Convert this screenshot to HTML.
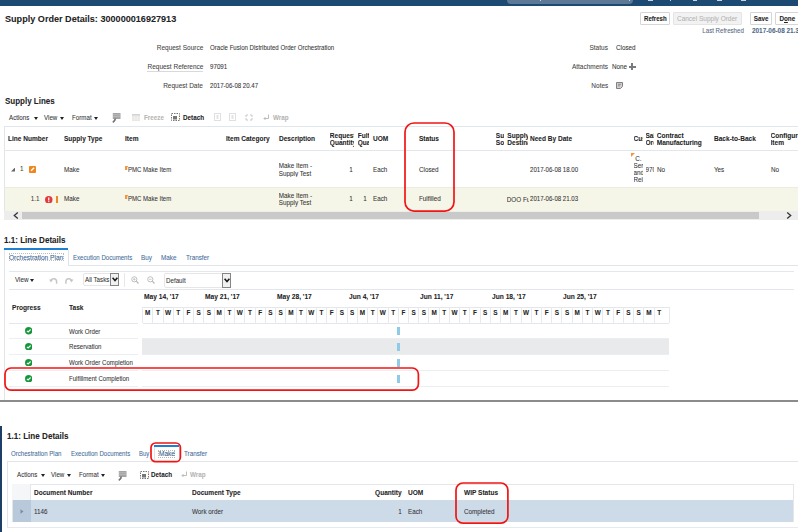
<!DOCTYPE html>
<html><head><meta charset="utf-8"><style>
html,body{margin:0;padding:0;background:#fff;width:803px;height:532px;overflow:hidden;position:relative}
body{font-family:"Liberation Sans",sans-serif}
.t{position:absolute;white-space:nowrap;line-height:1;font-family:"Liberation Sans",sans-serif;-webkit-text-stroke:0.06px currentColor}
.r{position:absolute;display:block}
</style></head><body>
<div class="r" style="left:0px;top:0px;width:798px;height:5.6px;background:#1d4a72"></div>
<div class="r" style="left:507px;top:0px;width:126px;height:3.6px;background:#5c7995;border-radius:0 0 5px 5px"></div>
<div class="r" style="left:539.5px;top:0px;width:1.5px;height:1.3px;background:#c9d4de"></div>
<div class="r" style="left:628.5px;top:0px;width:1.5px;height:1.3px;background:#c9d4de"></div>
<div class="r" style="left:647.5px;top:0px;width:5px;height:1.3px;background:#c9d4de"></div>
<div class="r" style="left:669.5px;top:0px;width:1.5px;height:1.3px;background:#c9d4de"></div>
<div class="r" style="left:693px;top:0px;width:4px;height:1.3px;background:#c9d4de"></div>
<div class="r" style="left:717.3px;top:0px;width:4.5px;height:1.3px;background:#c9d4de"></div>
<div class="r" style="left:741px;top:0px;width:4.5px;height:1.3px;background:#c9d4de"></div>
<div class="t" style="left:5px;top:14.00px;font-size:9.828px;font-weight:bold;color:#222;transform:scaleX(0.9259);transform-origin:0 0;">Supply Order Details: 300000016927913</div>
<div class="r" style="left:639.5px;top:12.1px;width:30.799999999999955px;height:13.4px;background:#fff;border:1px solid #d6d6d6;box-sizing:border-box;border-radius:1px"></div>
<div class="t" style="left:639.5px;width:30.799999999999955px;top:16px;font-size:6.588px;font-weight:bold;color:#222;text-align:center;transform:scaleX(0.9259);transform-origin:50% 0">Refresh</div>
<div class="r" style="left:673.4px;top:12.1px;width:68.20000000000005px;height:13.4px;background:#f2f2f2;border:1px solid #e4e4e4;box-sizing:border-box;border-radius:1px"></div>
<div class="t" style="left:673.4px;width:68.20000000000005px;top:15px;font-size:7.020px;font-weight:normal;color:#b3b3b3;text-align:center;transform:scaleX(0.9259);transform-origin:50% 0">Cancel Supply Order</div>
<div class="r" style="left:750.2px;top:12.2px;width:22.09999999999991px;height:12.8px;background:#fff;border:1px solid #d6d6d6;box-sizing:border-box;border-radius:1px"></div>
<div class="t" style="left:750.2px;width:22.09999999999991px;top:16px;font-size:6.804px;font-weight:bold;color:#222;text-align:center;transform:scaleX(0.9259);transform-origin:50% 0">Save</div>
<div class="r" style="left:775.3px;top:12.2px;width:24.700000000000045px;height:12.8px;background:#fff;border:1px solid #d6d6d6;box-sizing:border-box;border-radius:1px"></div>
<div class="t" style="left:775.3px;width:24.700000000000045px;top:16px;font-size:6.804px;font-weight:bold;color:#222;text-align:center;transform:scaleX(0.9259);transform-origin:50% 0">D<u>o</u>ne</div>
<div class="t" style="right:58.700000000000045px;top:28.00px;font-size:6.620px;font-weight:normal;color:#53687d;text-align:right;transform:scaleX(0.9259);transform-origin:100% 0;">Last Refreshed</div>
<div class="t" style="left:751.8px;top:28.00px;font-size:6.912px;font-weight:bold;color:#4d6a88;transform:scaleX(0.9259);transform-origin:0 0;">2017-06-08 21.35</div>
<div class="r" style="left:797.8px;top:8px;width:6px;height:30px;background:#fff"></div>
<div class="t" style="right:600px;top:44.00px;font-size:7.020px;font-weight:normal;color:#444;text-align:right;transform:scaleX(0.9259);transform-origin:100% 0;">Request Source</div>
<div class="t" style="left:210px;top:45.00px;font-size:6.588px;font-weight:normal;color:#333;transform:scaleX(0.9259);transform-origin:0 0;">Oracle Fusion Distributed Order Orchestration</div>
<div class="t" style="right:600px;top:63.00px;font-size:7.020px;font-weight:normal;color:#444;text-align:right;transform:scaleX(0.9259);transform-origin:100% 0;">Request Reference</div>
<div class="r" style="left:147px;top:70.5px;width:56px;height:1px;background:#d9d9d9"></div>
<div class="t" style="left:210px;top:64.00px;font-size:6.696px;font-weight:normal;color:#333;transform:scaleX(0.9259);transform-origin:0 0;">97091</div>
<div class="t" style="right:600px;top:82.00px;font-size:7.020px;font-weight:normal;color:#444;text-align:right;transform:scaleX(0.9259);transform-origin:100% 0;">Request Date</div>
<div class="t" style="left:210px;top:83.00px;font-size:6.588px;font-weight:normal;color:#333;transform:scaleX(0.9259);transform-origin:0 0;">2017-06-08 20.47</div>
<div class="t" style="right:195px;top:44.00px;font-size:7.020px;font-weight:normal;color:#444;text-align:right;transform:scaleX(0.9259);transform-origin:100% 0;">Status</div>
<div class="t" style="left:615.5px;top:45.00px;font-size:6.804px;font-weight:normal;color:#333;transform:scaleX(0.9259);transform-origin:0 0;">Closed</div>
<div class="t" style="right:195px;top:63.00px;font-size:7.020px;font-weight:normal;color:#444;text-align:right;transform:scaleX(0.9259);transform-origin:100% 0;">Attachments</div>
<div class="t" style="left:612.3px;top:64.00px;font-size:6.804px;font-weight:normal;color:#333;transform:scaleX(0.9259);transform-origin:0 0;">None</div>
<div class="r" style="left:628.8px;top:65.6px;width:7px;height:2px;background:#7a7a7a"></div>
<div class="r" style="left:631.3px;top:63.1px;width:2px;height:7px;background:#7a7a7a"></div>
<div class="t" style="right:195px;top:82.00px;font-size:7.020px;font-weight:normal;color:#444;text-align:right;transform:scaleX(0.9259);transform-origin:100% 0;">Notes</div>
<svg class="r" style="left:616.3px;top:81.5px" width="7" height="7" viewBox="0 0 7 7"><path d="M0.5 0.5 H6.5 V4.5 L4.5 6.5 H0.5 Z" fill="#d0d0d0" stroke="#808080" stroke-width="1"/><path d="M2 2.3 H5 M2 3.8 H4" stroke="#808080" stroke-width="0.8"/></svg>
<div class="t" style="left:5px;top:97.00px;font-size:8.640px;font-weight:bold;color:#222;transform:scaleX(0.9259);transform-origin:0 0;">Supply Lines</div>
<div class="t" style="left:9.2px;top:115.00px;font-size:6.696px;font-weight:normal;color:#333;transform:scaleX(0.9259);transform-origin:0 0;">Actions</div>
<div class="r" style="left:33.5px;top:116.63px;width:0;height:0;border-left:2.6px solid transparent;border-right:2.6px solid transparent;border-top:3.12px solid #222"></div>
<div class="t" style="left:44px;top:115.00px;font-size:6.696px;font-weight:normal;color:#333;transform:scaleX(0.9259);transform-origin:0 0;">View</div>
<div class="r" style="left:59.5px;top:116.63px;width:0;height:0;border-left:2.6px solid transparent;border-right:2.6px solid transparent;border-top:3.12px solid #222"></div>
<div class="t" style="left:71.5px;top:115.00px;font-size:6.696px;font-weight:normal;color:#333;transform:scaleX(0.9259);transform-origin:0 0;">Format</div>
<div class="r" style="left:93.5px;top:116.63px;width:0;height:0;border-left:2.6px solid transparent;border-right:2.6px solid transparent;border-top:3.12px solid #222"></div>
<svg class="r" style="left:111.5px;top:112.9px" width="9" height="10" viewBox="0 0 9 10"><rect x="0.8" y="0" width="7.7" height="6" fill="#a5a5a5"/><path d="M1 1.8 H8.3 M1 3.6 H8.3" stroke="#c8c8c8" stroke-width="0.6"/><path d="M3.3 5.5 Q3.3 7.6 0.8 9.3" stroke="#707070" stroke-width="1.6" fill="none"/></svg>
<svg class="r" style="left:132.2px;top:114px" width="8" height="7" viewBox="0 0 8 7"><rect x="0" y="0" width="8" height="7" fill="#e6e6e6"/><rect x="0" y="0" width="8" height="1.3" fill="#d2d2d2"/><path d="M2.7 1.3 V7 M5.3 1.3 V7 M0 3.5 H8 M0 5.2 H8" stroke="#f4f4f4" stroke-width="0.5"/></svg>
<div class="t" style="left:143.6px;top:115.00px;font-size:6.804px;font-weight:bold;color:#b5b5b5;transform:scaleX(0.9259);transform-origin:0 0;">Freeze</div>
<svg class="r" style="left:171px;top:113px" width="9" height="8" viewBox="0 0 9 8"><rect x="0.5" y="0.5" width="8" height="7" fill="none" stroke="#777" stroke-width="1" stroke-dasharray="1.5 1"/><rect x="2" y="3" width="4" height="3.5" fill="#777"/></svg>
<div class="t" style="left:182.8px;top:115.00px;font-size:6.804px;font-weight:bold;color:#222;transform:scaleX(0.9259);transform-origin:0 0;">Detach</div>
<svg class="r" style="left:213.7px;top:113px" width="7" height="8" viewBox="0 0 7 8"><rect x="0.5" y="0.5" width="6" height="7" fill="none" stroke="#e0e0e0" stroke-width="1"/><rect x="2.5" y="2" width="2" height="4" fill="#e4e4e4"/></svg>
<svg class="r" style="left:228.7px;top:113px" width="7" height="8" viewBox="0 0 7 8"><rect x="0.5" y="0.5" width="6" height="7" fill="none" stroke="#e0e0e0" stroke-width="1"/><rect x="2.5" y="2" width="2" height="4" fill="#e4e4e4"/></svg>
<svg class="r" style="left:245px;top:113.5px" width="8" height="7" viewBox="0 0 8 7"><path d="M1 1h2M5 1h2M1 6h2M5 6h2M1 1v2M7 1v2M1 4v2M7 4v2" stroke="#c8c8c8" stroke-width="1"/></svg>
<svg class="r" style="left:262.5px;top:113.5px" width="7" height="7" viewBox="0 0 7 7"><path d="M5.5 0.5 V4.5 H1 M2.5 3 L1 4.5 L2.5 6" stroke="#bdbdbd" stroke-width="1" fill="none"/></svg>
<div class="t" style="left:272.5px;top:115.00px;font-size:6.804px;font-weight:bold;color:#b5b5b5;transform:scaleX(0.9259);transform-origin:0 0;">Wrap</div>
<div class="r" style="left:4.2px;top:126px;width:793.8px;height:93.69999999999999px;border:1px solid #e1e6eb;border-bottom:none;border-right:none;box-sizing:border-box;background:#fff"></div>
<div class="r" style="left:4.2px;top:150.3px;width:793.8px;height:1px;background:#e3e7eb"></div>
<div class="r" style="left:5.2px;top:187px;width:792.8px;height:23.6px;background:#f6f6e8"></div>
<div class="r" style="left:5.2px;top:186.6px;width:792.8px;height:1px;background:#ececdc"></div>
<div class="r" style="left:4.2px;top:210.6px;width:793.8px;height:9.1px;background:#ededed"></div>
<div class="r" style="left:22px;top:211.8px;width:737px;height:7px;background:#c9c9c9"></div>
<svg class="r" style="left:12.5px;top:212px" width="6" height="7" viewBox="0 0 6 7"><path d="M4.8 0.6 L1.3 3.5 L4.8 6.4" stroke="#333" stroke-width="1.3" fill="none"/></svg>
<svg class="r" style="left:785.5px;top:212px" width="6" height="7" viewBox="0 0 6 7"><path d="M1.2 0.6 L4.7 3.5 L1.2 6.4" stroke="#333" stroke-width="1.3" fill="none"/></svg>
<div class="t" style="left:7.5px;top:135.00px;font-size:7.074px;font-weight:bold;color:#222;transform:scaleX(0.9259);transform-origin:0 0;">Line Number</div>
<div class="t" style="left:64px;top:135.00px;font-size:7.074px;font-weight:bold;color:#222;transform:scaleX(0.9259);transform-origin:0 0;">Supply Type</div>
<div class="t" style="left:125px;top:135.00px;font-size:7.074px;font-weight:bold;color:#222;transform:scaleX(0.9259);transform-origin:0 0;">Item</div>
<div class="t" style="left:225.7px;top:135.00px;font-size:7.074px;font-weight:bold;color:#222;transform:scaleX(0.9259);transform-origin:0 0;">Item Category</div>
<div class="t" style="left:278.8px;top:135.00px;font-size:7.074px;font-weight:bold;color:#222;transform:scaleX(0.9259);transform-origin:0 0;">Description</div>
<div class="t" style="left:329.8px;top:131.50px;width:24.2px;overflow:hidden;font-size:6.55px;line-height:7.6px;font-weight:bold;color:#222">Requested<br>Quantity</div>
<div class="t" style="left:357.7px;top:131.50px;width:11px;overflow:hidden;font-size:6.55px;line-height:7.6px;font-weight:bold;color:#222">Fulfilled<br>Quantity</div>
<div class="t" style="left:372.6px;top:135.00px;font-size:7.074px;font-weight:bold;color:#222;transform:scaleX(0.9259);transform-origin:0 0;">UOM</div>
<div class="t" style="left:419.3px;top:135.00px;font-size:7.074px;font-weight:bold;color:#222;transform:scaleX(0.9259);transform-origin:0 0;">Status</div>
<div class="t" style="left:495.8px;top:131.50px;width:8.3px;overflow:hidden;font-size:6.55px;line-height:7.6px;font-weight:bold;color:#222">Supply<br>Source</div>
<div class="t" style="left:507.3px;top:131.50px;width:20.5px;overflow:hidden;font-size:6.55px;line-height:7.6px;font-weight:bold;color:#222">Supply<br>Destination</div>
<div class="t" style="left:530.3px;top:135.00px;font-size:7.074px;font-weight:bold;color:#222;transform:scaleX(0.9259);transform-origin:0 0;">Need By Date</div>
<div class="t" style="left:633.5px;top:135.30px;width:9.5px;overflow:hidden;font-size:6.55px;line-height:7.6px;font-weight:bold;color:#222">Customer</div>
<div class="t" style="left:645.5px;top:131.50px;width:8.5px;overflow:hidden;font-size:6.55px;line-height:7.6px;font-weight:bold;color:#222">Sales<br>Order</div>
<div class="t" style="left:656.7px;top:131.50px;width:50px;overflow:hidden;font-size:6.55px;line-height:7.6px;font-weight:bold;color:#222">Contract<br>Manufacturing</div>
<div class="t" style="left:713.7px;top:135.00px;font-size:7.074px;font-weight:bold;color:#222;transform:scaleX(0.9259);transform-origin:0 0;">Back-to-Back</div>
<div class="t" style="left:770.5px;top:131.50px;width:27.5px;overflow:hidden;font-size:6.55px;line-height:7.6px;font-weight:bold;color:#222">Configured<br>Item</div>
<svg class="r" style="left:10.5px;top:167.3px" width="4.6" height="4.6" viewBox="0 0 4.6 4.6"><path d="M4.6 0 V4.6 H0 Z" fill="#666"/></svg>
<div class="t" style="left:20px;top:166.00px;font-size:6.804px;font-weight:normal;color:#444;transform:scaleX(0.9259);transform-origin:0 0;">1</div>
<div class="r" style="left:28.5px;top:166.1px;width:7.1px;height:6.6px;background:#f0861e;border-radius:1px"></div>
<svg class="r" style="left:28.5px;top:166.1px" width="7.1" height="6.6" viewBox="0 0 7 6.6"><path d="M2 4.8 L5 1.8" stroke="#fff" stroke-width="1.4"/></svg>
<div class="t" style="left:63.7px;top:167.00px;font-size:6.804px;font-weight:normal;color:#333;transform:scaleX(0.9259);transform-origin:0 0;">Make</div>
<svg class="r" style="left:125.2px;top:165.9px" width="3.4" height="4" viewBox="0 0 3.4 4"><path d="M0 0 H3.4 L2.2 1.6 V4 H0 Z" fill="#f7953e"/></svg>
<div class="t" style="left:128.3px;top:167.00px;font-size:6.534px;font-weight:normal;color:#333;transform:scaleX(0.9259);transform-origin:0 0;">PMC Make Item</div>
<div class="t" style="left:278.8px;top:162.30px;width:40px;overflow:hidden;font-size:6.3px;line-height:7.3px;font-weight:normal;color:#333">Make Item -<br>Supply Test</div>
<div class="t" style="right:450.5px;top:167.00px;font-size:6.804px;font-weight:normal;color:#333;text-align:right;transform:scaleX(0.9259);transform-origin:100% 0;">1</div>
<div class="t" style="left:372.6px;top:167.00px;font-size:6.804px;font-weight:normal;color:#333;transform:scaleX(0.9259);transform-origin:0 0;">Each</div>
<div class="t" style="left:419.3px;top:167.00px;font-size:6.804px;font-weight:normal;color:#333;transform:scaleX(0.9259);transform-origin:0 0;">Closed</div>
<div class="t" style="left:530.3px;top:167.00px;font-size:6.588px;font-weight:normal;color:#333;transform:scaleX(0.9259);transform-origin:0 0;">2017-06-08 18.00</div>
<svg class="r" style="left:631px;top:152.5px" width="4" height="4" viewBox="0 0 4 4"><path d="M0 0 H4 L0 4 Z" fill="#f7953e"/></svg>
<div class="t" style="left:633.5px;top:154.80px;width:9px;overflow:hidden;font-size:6.3px;line-height:7px;font-weight:normal;color:#333">&nbsp;C.<br>Ser<br>and<br>Rei</div>
<div class="t" style="left:645.5px;top:165.80px;width:8.5px;overflow:hidden;font-size:6.3px;line-height:7.6px;font-weight:normal;color:#333">970</div>
<div class="t" style="left:657px;top:167.00px;font-size:6.804px;font-weight:normal;color:#333;transform:scaleX(0.9259);transform-origin:0 0;">No</div>
<div class="t" style="left:713.7px;top:167.00px;font-size:6.804px;font-weight:normal;color:#333;transform:scaleX(0.9259);transform-origin:0 0;">Yes</div>
<div class="t" style="left:770.5px;top:167.00px;font-size:6.804px;font-weight:normal;color:#333;transform:scaleX(0.9259);transform-origin:0 0;">No</div>
<div class="t" style="right:763.2px;top:196.00px;font-size:6.804px;font-weight:normal;color:#444;text-align:right;transform:scaleX(0.9259);transform-origin:100% 0;">1.1</div>
<svg class="r" style="left:45.3px;top:195.6px" width="7.5" height="7.5" viewBox="0 0 7.5 7.5"><circle cx="3.75" cy="3.75" r="3.75" fill="#e0393e"/><rect x="3.15" y="1.5" width="1.2" height="3" fill="#fff"/><rect x="3.15" y="5.1" width="1.2" height="1" fill="#fff"/></svg>
<div class="r" style="left:55.8px;top:196.2px;width:2.1px;height:6.6px;background:#f0861e"></div>
<div class="t" style="left:63.7px;top:196.00px;font-size:6.804px;font-weight:normal;color:#333;transform:scaleX(0.9259);transform-origin:0 0;">Make</div>
<svg class="r" style="left:125.2px;top:195.4px" width="3.4" height="4" viewBox="0 0 3.4 4"><path d="M0 0 H3.4 L2.2 1.6 V4 H0 Z" fill="#f7953e"/></svg>
<div class="t" style="left:128.3px;top:196.00px;font-size:6.534px;font-weight:normal;color:#333;transform:scaleX(0.9259);transform-origin:0 0;">PMC Make Item</div>
<div class="t" style="left:278.8px;top:192.00px;width:40px;overflow:hidden;font-size:6.3px;line-height:7.3px;font-weight:normal;color:#333">Make Item -<br>Supply Test</div>
<div class="t" style="right:450.5px;top:196.00px;font-size:6.804px;font-weight:normal;color:#333;text-align:right;transform:scaleX(0.9259);transform-origin:100% 0;">1</div>
<div class="t" style="right:436.5px;top:196.00px;font-size:6.804px;font-weight:normal;color:#333;text-align:right;transform:scaleX(0.9259);transform-origin:100% 0;">1</div>
<div class="t" style="left:372.6px;top:196.00px;font-size:6.804px;font-weight:normal;color:#333;transform:scaleX(0.9259);transform-origin:0 0;">Each</div>
<div class="t" style="left:419.3px;top:196.00px;font-size:6.804px;font-weight:normal;color:#333;transform:scaleX(0.9259);transform-origin:0 0;">Fulfilled</div>
<div class="t" style="left:506.8px;top:195.50px;width:21.8px;overflow:hidden;font-size:6.3px;line-height:7.6px;font-weight:normal;color:#333">DOO Fulfillment</div>
<div class="t" style="left:530.3px;top:196.00px;font-size:6.588px;font-weight:normal;color:#333;transform:scaleX(0.9259);transform-origin:0 0;">2017-06-08 21.03</div>
<svg class="r" style="left:403.3px;top:121.4px" width="53.0" height="92.1"><rect x="2" y="2" width="49.0" height="88.1" rx="9" fill="none" stroke="#f21414" stroke-width="1.7"/></svg>
<div class="t" style="left:4.4px;top:236.00px;font-size:8.748px;font-weight:bold;color:#222;transform:scaleX(0.9259);transform-origin:0 0;">1.1: Line Details</div>
<div class="r" style="left:4.3px;top:250px;width:1px;height:151px;background:#e1e5ea"></div>
<div class="r" style="left:4.3px;top:248px;width:63.5px;height:2px;background:#1f7fd0"></div>
<div class="r" style="left:67.8px;top:250px;width:1px;height:15.5px;background:#dfe3e8"></div>
<div class="r" style="left:67.8px;top:265px;width:730.2px;height:1px;background:#e1e5ea"></div>
<div class="r" style="left:9px;top:253.3px;width:54.5px;height:8px;border:1px dotted #bdbdbd;box-sizing:border-box"></div>
<div class="t" style="left:9.2px;top:254.00px;font-size:7.074px;font-weight:normal;color:#35608f;transform:scaleX(0.9259);transform-origin:0 0;">Orchestration Plan</div>
<div class="t" style="left:72.7px;top:255.00px;font-size:6.588px;font-weight:normal;color:#3f6b9a;transform:scaleX(0.9259);transform-origin:0 0;">Execution Documents</div>
<div class="t" style="left:141.3px;top:255.00px;font-size:6.804px;font-weight:normal;color:#3f6b9a;transform:scaleX(0.9259);transform-origin:0 0;">Buy</div>
<div class="t" style="left:161px;top:255.00px;font-size:6.804px;font-weight:normal;color:#3f6b9a;transform:scaleX(0.9259);transform-origin:0 0;">Make</div>
<div class="t" style="left:185.5px;top:255.00px;font-size:6.804px;font-weight:normal;color:#3f6b9a;transform:scaleX(0.9259);transform-origin:0 0;">Transfer</div>
<div class="r" style="left:9.4px;top:271.2px;width:785.1px;height:1px;background:#e3e7ec"></div>
<div class="r" style="left:9.4px;top:288.8px;width:785.1px;height:1px;background:#e3e7ec"></div>
<div class="t" style="left:14.5px;top:277.00px;font-size:6.804px;font-weight:normal;color:#333;transform:scaleX(0.9259);transform-origin:0 0;">View</div>
<div class="r" style="left:30.3px;top:279.13px;width:0;height:0;border-left:2.6px solid transparent;border-right:2.6px solid transparent;border-top:3.12px solid #222"></div>
<svg class="r" style="left:49px;top:276.5px" width="8.5" height="7" viewBox="0 0 8.5 7"><path d="M2 3.6 A2.9 2.9 0 0 1 7.6 4.4 V6.8" stroke="#c6c6c6" stroke-width="1.5" fill="none"/><path d="M0 2.6 H4 L2 5.4 Z" fill="#c6c6c6"/></svg>
<svg class="r" style="left:65px;top:276.5px" width="8.5" height="7" viewBox="0 0 8.5 7"><path d="M6.5 3.6 A2.9 2.9 0 0 0 0.9 4.4 V6.8" stroke="#c6c6c6" stroke-width="1.5" fill="none"/><path d="M8.5 2.6 H4.5 L6.5 5.4 Z" fill="#c6c6c6"/></svg>
<div class="r" style="left:82.7px;top:273.4px;width:36.8px;height:13.0px;border:1px solid #e6e6e6;border-radius:2px;box-sizing:border-box;background:#fff"></div>
<div class="r" style="left:110.3px;top:273.4px;width:9.200000000000003px;height:13.0px;border:1px solid #858585;box-sizing:border-box;background:#f1f1f1"></div>
<svg class="r" style="left:111.8px;top:277.4px" width="6" height="5" viewBox="0 0 6 5"><path d="M0.6 0.8 L3 3.6 L5.4 0.8" stroke="#1a1a1a" stroke-width="1.6" fill="none"/></svg>
<div class="t" style="left:84.7px;top:277.00px;font-size:6.696px;font-weight:normal;color:#333;transform:scaleX(0.9259);transform-origin:0 0;">All Tasks</div>
<div class="r" style="left:124.2px;top:273px;width:1px;height:14px;background:#e8e8e8"></div>
<svg class="r" style="left:131px;top:275.5px" width="8" height="8" viewBox="0 0 8 8"><circle cx="3.3" cy="3.3" r="2.6" stroke="#b8b8b8" stroke-width="0.9" fill="none"/><path d="M5.2 5.2 L7.5 7.5" stroke="#b8b8b8" stroke-width="1.2"/><path d="M2 3.3 H4.6 M3.3 2 V4.6" stroke="#b8b8b8" stroke-width="0.7"/></svg>
<svg class="r" style="left:147px;top:275.5px" width="8" height="8" viewBox="0 0 8 8"><circle cx="3.3" cy="3.3" r="2.6" stroke="#b8b8b8" stroke-width="0.9" fill="none"/><path d="M5.2 5.2 L7.5 7.5" stroke="#b8b8b8" stroke-width="1.2"/><path d="M2 3.3 H4.6" stroke="#b8b8b8" stroke-width="0.7"/></svg>
<div class="r" style="left:163.7px;top:273px;width:67.30000000000001px;height:14.5px;border:1px solid #e6e6e6;border-radius:2px;box-sizing:border-box;background:#fff"></div>
<div class="r" style="left:222px;top:273px;width:9px;height:14.5px;border:1px solid #858585;box-sizing:border-box;background:#f1f1f1"></div>
<svg class="r" style="left:223.5px;top:277.75px" width="6" height="5" viewBox="0 0 6 5"><path d="M0.6 0.8 L3 3.6 L5.4 0.8" stroke="#1a1a1a" stroke-width="1.6" fill="none"/></svg>
<div class="t" style="left:165.7px;top:278.00px;font-size:6.696px;font-weight:normal;color:#333;transform:scaleX(0.9259);transform-origin:0 0;">Default</div>
<div class="t" style="left:12.3px;top:305.00px;font-size:7.128px;font-weight:bold;color:#222;transform:scaleX(0.9259);transform-origin:0 0;">Progress</div>
<div class="t" style="left:69px;top:305.00px;font-size:7.128px;font-weight:bold;color:#222;transform:scaleX(0.9259);transform-origin:0 0;">Task</div>
<div class="r" style="left:9.4px;top:323px;width:128.6px;height:1px;background:#e3e7ec"></div>
<div class="t" style="left:144.0px;top:294.00px;font-size:7.182px;font-weight:bold;color:#222;transform:scaleX(0.9259);transform-origin:0 0;">May 14, '17</div>
<div class="t" style="left:205.38px;top:294.00px;font-size:7.182px;font-weight:bold;color:#222;transform:scaleX(0.9259);transform-origin:0 0;">May 21, '17</div>
<div class="t" style="left:276.99px;top:294.00px;font-size:7.182px;font-weight:bold;color:#222;transform:scaleX(0.9259);transform-origin:0 0;">May 28, '17</div>
<div class="t" style="left:348.6px;top:294.00px;font-size:7.182px;font-weight:bold;color:#222;transform:scaleX(0.9259);transform-origin:0 0;">Jun 4, '17</div>
<div class="t" style="left:420.21px;top:294.00px;font-size:7.182px;font-weight:bold;color:#222;transform:scaleX(0.9259);transform-origin:0 0;">Jun 11, '17</div>
<div class="t" style="left:491.82px;top:294.00px;font-size:7.182px;font-weight:bold;color:#222;transform:scaleX(0.9259);transform-origin:0 0;">Jun 18, '17</div>
<div class="t" style="left:563.43px;top:294.00px;font-size:7.182px;font-weight:bold;color:#222;transform:scaleX(0.9259);transform-origin:0 0;">Jun 25, '17</div>
<div class="r" style="left:142.5px;top:307.2px;width:526.5px;height:1px;background:#e3e7ec"></div>
<div class="r" style="left:142.5px;top:322.8px;width:526.5px;height:1px;background:#e3e7ec"></div>
<div class="r" style="left:142.05px;top:307.2px;width:1px;height:15.600000000000023px;background:#e6eaee"></div>
<div class="t" style="left:142.50px;width:10.23px;top:309.80px;font-size:6.4px;font-weight:bold;color:#222;text-align:center">M</div>
<div class="r" style="left:152.28px;top:307.2px;width:1px;height:15.600000000000023px;background:#e6eaee"></div>
<div class="t" style="left:152.73px;width:10.23px;top:309.80px;font-size:6.4px;font-weight:bold;color:#222;text-align:center">T</div>
<div class="r" style="left:162.51px;top:307.2px;width:1px;height:15.600000000000023px;background:#e6eaee"></div>
<div class="t" style="left:162.96px;width:10.23px;top:309.80px;font-size:6.4px;font-weight:bold;color:#222;text-align:center">W</div>
<div class="r" style="left:172.74px;top:307.2px;width:1px;height:15.600000000000023px;background:#e6eaee"></div>
<div class="t" style="left:173.19px;width:10.23px;top:309.80px;font-size:6.4px;font-weight:bold;color:#222;text-align:center">T</div>
<div class="r" style="left:182.97px;top:307.2px;width:1px;height:15.600000000000023px;background:#e6eaee"></div>
<div class="t" style="left:183.42px;width:10.23px;top:309.80px;font-size:6.4px;font-weight:bold;color:#222;text-align:center">F</div>
<div class="r" style="left:193.2px;top:307.2px;width:1px;height:15.600000000000023px;background:#e6eaee"></div>
<div class="t" style="left:193.65px;width:10.23px;top:309.80px;font-size:6.4px;font-weight:bold;color:#222;text-align:center">S</div>
<div class="r" style="left:203.43px;top:307.2px;width:1px;height:15.600000000000023px;background:#e6eaee"></div>
<div class="t" style="left:203.88px;width:10.23px;top:309.80px;font-size:6.4px;font-weight:bold;color:#222;text-align:center">S</div>
<div class="r" style="left:213.66px;top:307.2px;width:1px;height:15.600000000000023px;background:#e6eaee"></div>
<div class="t" style="left:214.11px;width:10.23px;top:309.80px;font-size:6.4px;font-weight:bold;color:#222;text-align:center">M</div>
<div class="r" style="left:223.89px;top:307.2px;width:1px;height:15.600000000000023px;background:#e6eaee"></div>
<div class="t" style="left:224.34px;width:10.23px;top:309.80px;font-size:6.4px;font-weight:bold;color:#222;text-align:center">T</div>
<div class="r" style="left:234.12px;top:307.2px;width:1px;height:15.600000000000023px;background:#e6eaee"></div>
<div class="t" style="left:234.57px;width:10.23px;top:309.80px;font-size:6.4px;font-weight:bold;color:#222;text-align:center">W</div>
<div class="r" style="left:244.35px;top:307.2px;width:1px;height:15.600000000000023px;background:#e6eaee"></div>
<div class="t" style="left:244.80px;width:10.23px;top:309.80px;font-size:6.4px;font-weight:bold;color:#222;text-align:center">T</div>
<div class="r" style="left:254.58px;top:307.2px;width:1px;height:15.600000000000023px;background:#e6eaee"></div>
<div class="t" style="left:255.03px;width:10.23px;top:309.80px;font-size:6.4px;font-weight:bold;color:#222;text-align:center">F</div>
<div class="r" style="left:264.81px;top:307.2px;width:1px;height:15.600000000000023px;background:#e6eaee"></div>
<div class="t" style="left:265.26px;width:10.23px;top:309.80px;font-size:6.4px;font-weight:bold;color:#222;text-align:center">S</div>
<div class="r" style="left:275.04px;top:307.2px;width:1px;height:15.600000000000023px;background:#e6eaee"></div>
<div class="t" style="left:275.49px;width:10.23px;top:309.80px;font-size:6.4px;font-weight:bold;color:#222;text-align:center">S</div>
<div class="r" style="left:285.27px;top:307.2px;width:1px;height:15.600000000000023px;background:#e6eaee"></div>
<div class="t" style="left:285.72px;width:10.23px;top:309.80px;font-size:6.4px;font-weight:bold;color:#222;text-align:center">M</div>
<div class="r" style="left:295.5px;top:307.2px;width:1px;height:15.600000000000023px;background:#e6eaee"></div>
<div class="t" style="left:295.95px;width:10.23px;top:309.80px;font-size:6.4px;font-weight:bold;color:#222;text-align:center">T</div>
<div class="r" style="left:305.73px;top:307.2px;width:1px;height:15.600000000000023px;background:#e6eaee"></div>
<div class="t" style="left:306.18px;width:10.23px;top:309.80px;font-size:6.4px;font-weight:bold;color:#222;text-align:center">W</div>
<div class="r" style="left:315.96px;top:307.2px;width:1px;height:15.600000000000023px;background:#e6eaee"></div>
<div class="t" style="left:316.41px;width:10.23px;top:309.80px;font-size:6.4px;font-weight:bold;color:#222;text-align:center">T</div>
<div class="r" style="left:326.19px;top:307.2px;width:1px;height:15.600000000000023px;background:#e6eaee"></div>
<div class="t" style="left:326.64px;width:10.23px;top:309.80px;font-size:6.4px;font-weight:bold;color:#222;text-align:center">F</div>
<div class="r" style="left:336.42px;top:307.2px;width:1px;height:15.600000000000023px;background:#e6eaee"></div>
<div class="t" style="left:336.87px;width:10.23px;top:309.80px;font-size:6.4px;font-weight:bold;color:#222;text-align:center">S</div>
<div class="r" style="left:346.65px;top:307.2px;width:1px;height:15.600000000000023px;background:#e6eaee"></div>
<div class="t" style="left:347.10px;width:10.23px;top:309.80px;font-size:6.4px;font-weight:bold;color:#222;text-align:center">S</div>
<div class="r" style="left:356.88px;top:307.2px;width:1px;height:15.600000000000023px;background:#e6eaee"></div>
<div class="t" style="left:357.33px;width:10.23px;top:309.80px;font-size:6.4px;font-weight:bold;color:#222;text-align:center">M</div>
<div class="r" style="left:367.11px;top:307.2px;width:1px;height:15.600000000000023px;background:#e6eaee"></div>
<div class="t" style="left:367.56px;width:10.23px;top:309.80px;font-size:6.4px;font-weight:bold;color:#222;text-align:center">T</div>
<div class="r" style="left:377.34px;top:307.2px;width:1px;height:15.600000000000023px;background:#e6eaee"></div>
<div class="t" style="left:377.79px;width:10.23px;top:309.80px;font-size:6.4px;font-weight:bold;color:#222;text-align:center">W</div>
<div class="r" style="left:387.57px;top:307.2px;width:1px;height:15.600000000000023px;background:#e6eaee"></div>
<div class="t" style="left:388.02px;width:10.23px;top:309.80px;font-size:6.4px;font-weight:bold;color:#222;text-align:center">T</div>
<div class="r" style="left:397.8px;top:307.2px;width:1px;height:15.600000000000023px;background:#e6eaee"></div>
<div class="t" style="left:398.25px;width:10.23px;top:309.80px;font-size:6.4px;font-weight:bold;color:#222;text-align:center">F</div>
<div class="r" style="left:408.03px;top:307.2px;width:1px;height:15.600000000000023px;background:#e6eaee"></div>
<div class="t" style="left:408.48px;width:10.23px;top:309.80px;font-size:6.4px;font-weight:bold;color:#222;text-align:center">S</div>
<div class="r" style="left:418.26px;top:307.2px;width:1px;height:15.600000000000023px;background:#e6eaee"></div>
<div class="t" style="left:418.71px;width:10.23px;top:309.80px;font-size:6.4px;font-weight:bold;color:#222;text-align:center">S</div>
<div class="r" style="left:428.49px;top:307.2px;width:1px;height:15.600000000000023px;background:#e6eaee"></div>
<div class="t" style="left:428.94px;width:10.23px;top:309.80px;font-size:6.4px;font-weight:bold;color:#222;text-align:center">M</div>
<div class="r" style="left:438.72px;top:307.2px;width:1px;height:15.600000000000023px;background:#e6eaee"></div>
<div class="t" style="left:439.17px;width:10.23px;top:309.80px;font-size:6.4px;font-weight:bold;color:#222;text-align:center">T</div>
<div class="r" style="left:448.95px;top:307.2px;width:1px;height:15.600000000000023px;background:#e6eaee"></div>
<div class="t" style="left:449.40px;width:10.23px;top:309.80px;font-size:6.4px;font-weight:bold;color:#222;text-align:center">W</div>
<div class="r" style="left:459.18px;top:307.2px;width:1px;height:15.600000000000023px;background:#e6eaee"></div>
<div class="t" style="left:459.63px;width:10.23px;top:309.80px;font-size:6.4px;font-weight:bold;color:#222;text-align:center">T</div>
<div class="r" style="left:469.41px;top:307.2px;width:1px;height:15.600000000000023px;background:#e6eaee"></div>
<div class="t" style="left:469.86px;width:10.23px;top:309.80px;font-size:6.4px;font-weight:bold;color:#222;text-align:center">F</div>
<div class="r" style="left:479.64px;top:307.2px;width:1px;height:15.600000000000023px;background:#e6eaee"></div>
<div class="t" style="left:480.09px;width:10.23px;top:309.80px;font-size:6.4px;font-weight:bold;color:#222;text-align:center">S</div>
<div class="r" style="left:489.87px;top:307.2px;width:1px;height:15.600000000000023px;background:#e6eaee"></div>
<div class="t" style="left:490.32px;width:10.23px;top:309.80px;font-size:6.4px;font-weight:bold;color:#222;text-align:center">S</div>
<div class="r" style="left:500.1px;top:307.2px;width:1px;height:15.600000000000023px;background:#e6eaee"></div>
<div class="t" style="left:500.55px;width:10.23px;top:309.80px;font-size:6.4px;font-weight:bold;color:#222;text-align:center">M</div>
<div class="r" style="left:510.33px;top:307.2px;width:1px;height:15.600000000000023px;background:#e6eaee"></div>
<div class="t" style="left:510.78px;width:10.23px;top:309.80px;font-size:6.4px;font-weight:bold;color:#222;text-align:center">T</div>
<div class="r" style="left:520.56px;top:307.2px;width:1px;height:15.600000000000023px;background:#e6eaee"></div>
<div class="t" style="left:521.01px;width:10.23px;top:309.80px;font-size:6.4px;font-weight:bold;color:#222;text-align:center">W</div>
<div class="r" style="left:530.79px;top:307.2px;width:1px;height:15.600000000000023px;background:#e6eaee"></div>
<div class="t" style="left:531.24px;width:10.23px;top:309.80px;font-size:6.4px;font-weight:bold;color:#222;text-align:center">T</div>
<div class="r" style="left:541.02px;top:307.2px;width:1px;height:15.600000000000023px;background:#e6eaee"></div>
<div class="t" style="left:541.47px;width:10.23px;top:309.80px;font-size:6.4px;font-weight:bold;color:#222;text-align:center">F</div>
<div class="r" style="left:551.25px;top:307.2px;width:1px;height:15.600000000000023px;background:#e6eaee"></div>
<div class="t" style="left:551.70px;width:10.23px;top:309.80px;font-size:6.4px;font-weight:bold;color:#222;text-align:center">S</div>
<div class="r" style="left:561.48px;top:307.2px;width:1px;height:15.600000000000023px;background:#e6eaee"></div>
<div class="t" style="left:561.93px;width:10.23px;top:309.80px;font-size:6.4px;font-weight:bold;color:#222;text-align:center">S</div>
<div class="r" style="left:571.71px;top:307.2px;width:1px;height:15.600000000000023px;background:#e6eaee"></div>
<div class="t" style="left:572.16px;width:10.23px;top:309.80px;font-size:6.4px;font-weight:bold;color:#222;text-align:center">M</div>
<div class="r" style="left:581.94px;top:307.2px;width:1px;height:15.600000000000023px;background:#e6eaee"></div>
<div class="t" style="left:582.39px;width:10.23px;top:309.80px;font-size:6.4px;font-weight:bold;color:#222;text-align:center">T</div>
<div class="r" style="left:592.17px;top:307.2px;width:1px;height:15.600000000000023px;background:#e6eaee"></div>
<div class="t" style="left:592.62px;width:10.23px;top:309.80px;font-size:6.4px;font-weight:bold;color:#222;text-align:center">W</div>
<div class="r" style="left:602.4px;top:307.2px;width:1px;height:15.600000000000023px;background:#e6eaee"></div>
<div class="t" style="left:602.85px;width:10.23px;top:309.80px;font-size:6.4px;font-weight:bold;color:#222;text-align:center">T</div>
<div class="r" style="left:612.63px;top:307.2px;width:1px;height:15.600000000000023px;background:#e6eaee"></div>
<div class="t" style="left:613.08px;width:10.23px;top:309.80px;font-size:6.4px;font-weight:bold;color:#222;text-align:center">F</div>
<div class="r" style="left:622.86px;top:307.2px;width:1px;height:15.600000000000023px;background:#e6eaee"></div>
<div class="t" style="left:623.31px;width:10.23px;top:309.80px;font-size:6.4px;font-weight:bold;color:#222;text-align:center">S</div>
<div class="r" style="left:633.09px;top:307.2px;width:1px;height:15.600000000000023px;background:#e6eaee"></div>
<div class="t" style="left:633.54px;width:10.23px;top:309.80px;font-size:6.4px;font-weight:bold;color:#222;text-align:center">S</div>
<div class="r" style="left:643.32px;top:307.2px;width:1px;height:15.600000000000023px;background:#e6eaee"></div>
<div class="t" style="left:643.77px;width:10.23px;top:309.80px;font-size:6.4px;font-weight:bold;color:#222;text-align:center">M</div>
<div class="r" style="left:653.55px;top:307.2px;width:1px;height:15.600000000000023px;background:#e6eaee"></div>
<div class="t" style="left:654.00px;width:10.23px;top:309.80px;font-size:6.4px;font-weight:bold;color:#222;text-align:center">T</div>
<div class="r" style="left:669px;top:307.2px;width:1px;height:15.600000000000023px;background:#e6eaee"></div>
<div class="r" style="left:142px;top:338.6px;width:527px;height:16px;background:#e9eaeb"></div>
<div class="r" style="left:9.4px;top:338.2px;width:128.6px;height:1px;background:#eceff2"></div>
<div class="r" style="left:142px;top:338.2px;width:527px;height:1px;background:#eceff2"></div>
<div class="r" style="left:9.4px;top:354.2px;width:128.6px;height:1px;background:#eceff2"></div>
<div class="r" style="left:142px;top:354.2px;width:527px;height:1px;background:#eceff2"></div>
<div class="r" style="left:9.4px;top:370.3px;width:128.6px;height:1px;background:#eceff2"></div>
<div class="r" style="left:142px;top:370.3px;width:527px;height:1px;background:#eceff2"></div>
<div class="r" style="left:9.4px;top:386.2px;width:128.6px;height:1px;background:#eceff2"></div>
<div class="r" style="left:142px;top:386.2px;width:527px;height:1px;background:#eceff2"></div>
<svg class="r" style="left:24.8px;top:327.30px" width="7.4" height="7.4" viewBox="0 0 7.4 7.4"><circle cx="3.7" cy="3.7" r="3.7" fill="#14973a"/><path d="M1.9 3.8 L3.2 5 L5.6 2.5" stroke="#fff" stroke-width="1.1" fill="none"/></svg>
<div class="t" style="left:69px;top:329.00px;font-size:6.588px;font-weight:normal;color:#333;transform:scaleX(0.9259);transform-origin:0 0;">Work Order</div>
<svg class="r" style="left:24.8px;top:342.90px" width="7.4" height="7.4" viewBox="0 0 7.4 7.4"><circle cx="3.7" cy="3.7" r="3.7" fill="#14973a"/><path d="M1.9 3.8 L3.2 5 L5.6 2.5" stroke="#fff" stroke-width="1.1" fill="none"/></svg>
<div class="t" style="left:69px;top:344.00px;font-size:6.588px;font-weight:normal;color:#333;transform:scaleX(0.9259);transform-origin:0 0;">Reservation</div>
<svg class="r" style="left:24.8px;top:358.60px" width="7.4" height="7.4" viewBox="0 0 7.4 7.4"><circle cx="3.7" cy="3.7" r="3.7" fill="#14973a"/><path d="M1.9 3.8 L3.2 5 L5.6 2.5" stroke="#fff" stroke-width="1.1" fill="none"/></svg>
<div class="t" style="left:69px;top:360.00px;font-size:6.588px;font-weight:normal;color:#333;transform:scaleX(0.9259);transform-origin:0 0;">Work Order Completion</div>
<svg class="r" style="left:24.8px;top:374.80px" width="7.4" height="7.4" viewBox="0 0 7.4 7.4"><circle cx="3.7" cy="3.7" r="3.7" fill="#14973a"/><path d="M1.9 3.8 L3.2 5 L5.6 2.5" stroke="#fff" stroke-width="1.1" fill="none"/></svg>
<div class="t" style="left:69px;top:376.00px;font-size:6.588px;font-weight:normal;color:#333;transform:scaleX(0.9259);transform-origin:0 0;">Fulfillment Completion</div>
<div class="r" style="left:397.2px;top:327.1px;width:2.7px;height:7.7999999999999545px;background:#8fcbe6"></div>
<div class="r" style="left:397.2px;top:342.8px;width:2.7px;height:8.0px;background:#8fcbe6"></div>
<div class="r" style="left:397.2px;top:359.2px;width:2.7px;height:7.800000000000011px;background:#8fcbe6"></div>
<div class="r" style="left:397.2px;top:375px;width:2.7px;height:7.600000000000023px;background:#8fcbe6"></div>
<svg class="r" style="left:2.5px;top:366.2px" width="417.4" height="26.1"><rect x="2" y="2" width="413.4" height="22.1" rx="6" fill="none" stroke="#f21414" stroke-width="1.7"/></svg>
<div class="r" style="left:0px;top:399.8px;width:798px;height:2px;background:#8b8b8b"></div>
<div class="r" style="left:0px;top:425.5px;width:1.6px;height:106.5px;background:#1d3f66"></div>
<div class="t" style="left:6.6px;top:432.00px;font-size:8.748px;font-weight:bold;color:#222;transform:scaleX(0.9259);transform-origin:0 0;">1.1: Line Details</div>
<div class="t" style="left:11px;top:451.00px;font-size:6.588px;font-weight:normal;color:#3f6b9a;transform:scaleX(0.9259);transform-origin:0 0;">Orchestration Plan</div>
<div class="t" style="left:70.7px;top:451.00px;font-size:6.588px;font-weight:normal;color:#3f6b9a;transform:scaleX(0.9259);transform-origin:0 0;">Execution Documents</div>
<div class="t" style="left:138.6px;top:451.00px;font-size:6.426px;font-weight:normal;color:#3f6b9a;transform:scaleX(0.9259);transform-origin:0 0;">Buy</div>
<div class="r" style="left:154px;top:444.5px;width:25.3px;height:2px;background:#1f7fd0"></div>
<div class="r" style="left:154px;top:446.5px;width:1px;height:14.5px;background:#dfe3e8"></div>
<div class="r" style="left:179.3px;top:446.5px;width:1px;height:14.5px;background:#dfe3e8"></div>
<div class="r" style="left:158px;top:449.5px;width:16.5px;height:8px;border:1px dotted #b5b5b5;box-sizing:border-box"></div>
<div class="t" style="left:158.9px;top:450.00px;font-size:7.074px;font-weight:normal;color:#2f5786;transform:scaleX(0.9259);transform-origin:0 0;">Make</div>
<div class="t" style="left:183.8px;top:451.00px;font-size:6.804px;font-weight:normal;color:#3f6b9a;transform:scaleX(0.9259);transform-origin:0 0;">Transfer</div>
<div class="r" style="left:6.6px;top:460.8px;width:147.4px;height:1px;background:#e1e5ea"></div>
<div class="r" style="left:179.3px;top:460.8px;width:618.7px;height:1px;background:#e1e5ea"></div>
<div class="r" style="left:6.6px;top:461px;width:1px;height:66.5px;background:#e1e5ea"></div>
<div class="r" style="left:6.6px;top:526.8px;width:791.4px;height:1px;background:#e6e9ed"></div>
<div class="t" style="left:17.3px;top:472.00px;font-size:6.696px;font-weight:normal;color:#333;transform:scaleX(0.9259);transform-origin:0 0;">Actions</div>
<div class="r" style="left:40.5px;top:474.03px;width:0;height:0;border-left:2.6px solid transparent;border-right:2.6px solid transparent;border-top:3.12px solid #222"></div>
<div class="t" style="left:51.2px;top:472.00px;font-size:6.696px;font-weight:normal;color:#333;transform:scaleX(0.9259);transform-origin:0 0;">View</div>
<div class="r" style="left:67px;top:474.03px;width:0;height:0;border-left:2.6px solid transparent;border-right:2.6px solid transparent;border-top:3.12px solid #222"></div>
<div class="t" style="left:79px;top:472.00px;font-size:6.696px;font-weight:normal;color:#333;transform:scaleX(0.9259);transform-origin:0 0;">Format</div>
<div class="r" style="left:101px;top:474.03px;width:0;height:0;border-left:2.6px solid transparent;border-right:2.6px solid transparent;border-top:3.12px solid #222"></div>
<svg class="r" style="left:118px;top:470.5px" width="9" height="10" viewBox="0 0 9 10"><rect x="0.8" y="0" width="7.7" height="6" fill="#a5a5a5"/><path d="M1 1.8 H8.3 M1 3.6 H8.3" stroke="#c8c8c8" stroke-width="0.6"/><path d="M3.3 5.5 Q3.3 7.6 0.8 9.3" stroke="#707070" stroke-width="1.6" fill="none"/></svg>
<svg class="r" style="left:140px;top:470.5px" width="9" height="8" viewBox="0 0 9 8"><rect x="0.5" y="0.5" width="8" height="7" fill="none" stroke="#777" stroke-width="1" stroke-dasharray="1.5 1"/><rect x="2" y="3" width="4" height="3.5" fill="#777"/></svg>
<div class="t" style="left:151px;top:472.00px;font-size:6.804px;font-weight:bold;color:#222;transform:scaleX(0.9259);transform-origin:0 0;">Detach</div>
<svg class="r" style="left:181px;top:471px" width="7" height="7" viewBox="0 0 7 7"><path d="M5.5 0.5 V4.5 H1 M2.5 3 L1 4.5 L2.5 6" stroke="#bdbdbd" stroke-width="1" fill="none"/></svg>
<div class="t" style="left:190px;top:472.00px;font-size:6.804px;font-weight:bold;color:#b5b5b5;transform:scaleX(0.9259);transform-origin:0 0;">Wrap</div>
<div class="r" style="left:12.2px;top:483.7px;width:781.9px;height:38.599999999999966px;border:1px solid #e3e6ea;box-sizing:border-box;background:#fff"></div>
<div class="r" style="left:12.2px;top:483.7px;width:18.5px;height:16.3px;background:#f5f6f7;border-right:1px solid #e3e6ea;box-sizing:border-box"></div>
<div class="r" style="left:13px;top:500px;width:780.3000000000001px;height:22.2px;background:#cddbe9"></div>
<div class="r" style="left:13px;top:500px;width:17.7px;height:22.2px;background:#b7c9db"></div>
<svg class="r" style="left:20.3px;top:508.8px" width="4" height="5" viewBox="0 0 4 5"><path d="M0.5 0.3 L3.5 2.5 L0.5 4.7 Z" fill="#7f8c99"/></svg>
<div class="t" style="left:34.2px;top:489.00px;font-size:7.074px;font-weight:bold;color:#222;transform:scaleX(0.9259);transform-origin:0 0;">Document Number</div>
<div class="t" style="left:192.3px;top:489.00px;font-size:7.074px;font-weight:bold;color:#222;transform:scaleX(0.9259);transform-origin:0 0;">Document Type</div>
<div class="t" style="right:401px;top:489.00px;font-size:7.074px;font-weight:bold;color:#222;text-align:right;transform:scaleX(0.9259);transform-origin:100% 0;">Quantity</div>
<div class="t" style="left:407.8px;top:489.00px;font-size:7.074px;font-weight:bold;color:#222;transform:scaleX(0.9259);transform-origin:0 0;">UOM</div>
<div class="t" style="left:464.3px;top:489.00px;font-size:7.074px;font-weight:bold;color:#222;transform:scaleX(0.9259);transform-origin:0 0;">WIP Status</div>
<div class="t" style="left:34.2px;top:509.00px;font-size:6.804px;font-weight:normal;color:#333;transform:scaleX(0.9259);transform-origin:0 0;">1146</div>
<div class="t" style="left:192.3px;top:509.00px;font-size:6.804px;font-weight:normal;color:#333;transform:scaleX(0.9259);transform-origin:0 0;">Work order</div>
<div class="t" style="right:401.5px;top:509.00px;font-size:6.804px;font-weight:normal;color:#333;text-align:right;transform:scaleX(0.9259);transform-origin:100% 0;">1</div>
<div class="t" style="left:407.8px;top:509.00px;font-size:6.804px;font-weight:normal;color:#333;transform:scaleX(0.9259);transform-origin:0 0;">Each</div>
<div class="t" style="left:464.3px;top:509.00px;font-size:6.804px;font-weight:normal;color:#333;transform:scaleX(0.9259);transform-origin:0 0;">Completed</div>
<svg class="r" style="left:453.8px;top:481.3px" width="55.9" height="44.2"><rect x="2" y="2" width="51.9" height="40.2" rx="7" fill="none" stroke="#f21414" stroke-width="1.7"/></svg>
<svg class="r" style="left:149.3px;top:440.6px" width="33.4" height="22.7"><rect x="2" y="2" width="29.4" height="18.7" rx="4.5" fill="none" stroke="#f21414" stroke-width="1.7"/></svg>
</body></html>
